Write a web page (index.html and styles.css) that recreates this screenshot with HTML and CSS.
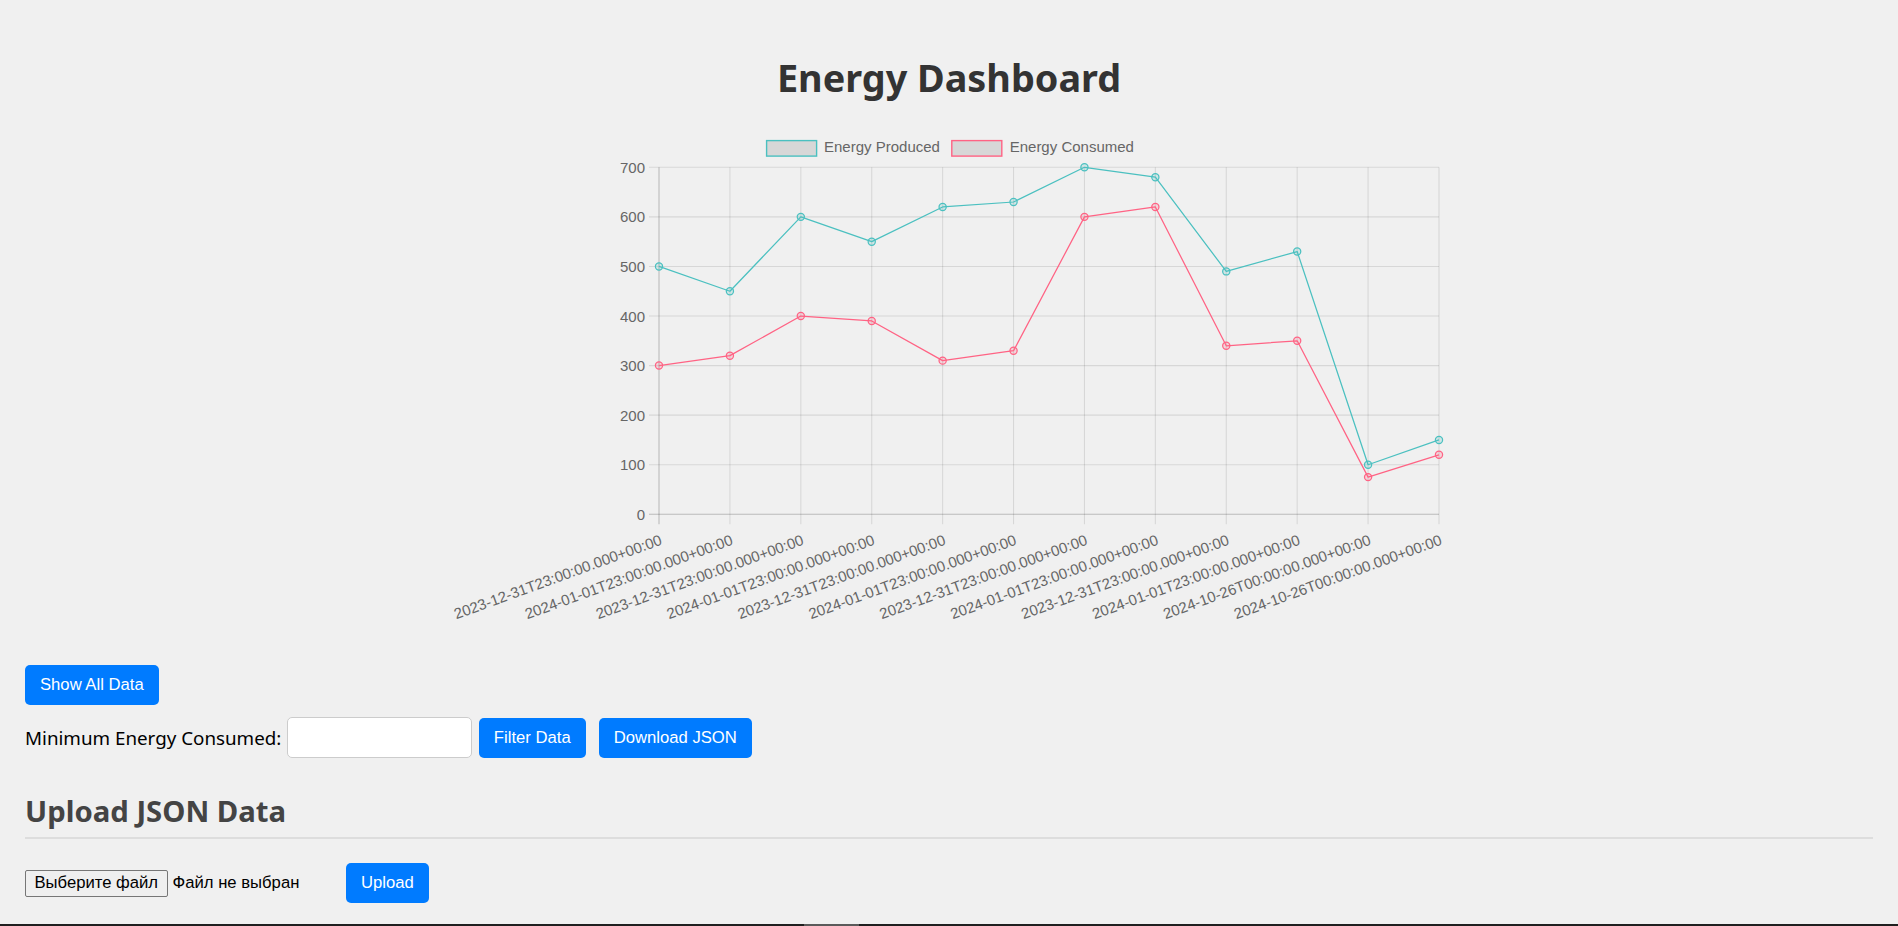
FILE: index.html
```html
<!DOCTYPE html>
<html lang="en">
<head>
<meta charset="utf-8">
<title>Energy Dashboard</title>
<link rel="stylesheet" href="styles.css">
</head>
<body>
<h1 class="title">Energy Dashboard</h1>

<div class="chart-wrap">
<svg class="chart" width="1000" height="500" viewBox="0 0 1000 500" xmlns="http://www.w3.org/2000/svg">
  <!-- legend -->
  <g class="legend">
    <rect class="lg-box lg-prod" x="317.6" y="13.6" width="50" height="15.5"/>
    <text class="lg-text" x="375" y="25.3">Energy Produced</text>
    <rect class="lg-box lg-cons" x="502.8" y="13.6" width="50" height="15.5"/>
    <text class="lg-text" x="560.7" y="25.3">Energy Consumed</text>
  </g>
  <!-- horizontal grid -->
  <g class="grid">
    <line x1="200" y1="40.3" x2="990" y2="40.3"/>
    <line x1="200" y1="89.87" x2="990" y2="89.87"/>
    <line x1="200" y1="139.44" x2="990" y2="139.44"/>
    <line x1="200" y1="189.02" x2="990" y2="189.02"/>
    <line x1="200" y1="238.59" x2="990" y2="238.59"/>
    <line x1="200" y1="288.16" x2="990" y2="288.16"/>
    <line x1="200" y1="337.73" x2="990" y2="337.73"/>
    <line x1="280.91" y1="40.3" x2="280.91" y2="397.3"/>
    <line x1="351.82" y1="40.3" x2="351.82" y2="397.3"/>
    <line x1="422.73" y1="40.3" x2="422.73" y2="397.3"/>
    <line x1="493.64" y1="40.3" x2="493.64" y2="397.3"/>
    <line x1="564.55" y1="40.3" x2="564.55" y2="397.3"/>
    <line x1="635.45" y1="40.3" x2="635.45" y2="397.3"/>
    <line x1="706.36" y1="40.3" x2="706.36" y2="397.3"/>
    <line x1="777.27" y1="40.3" x2="777.27" y2="397.3"/>
    <line x1="848.18" y1="40.3" x2="848.18" y2="397.3"/>
    <line x1="919.09" y1="40.3" x2="919.09" y2="397.3"/>
    <line x1="990" y1="40.3" x2="990" y2="397.3"/>
  </g>
  <g class="axis">
    <line x1="200" y1="387.3" x2="990" y2="387.3"/>
    <line x1="210" y1="40.3" x2="210" y2="397.3"/>
  </g>
  <!-- y labels -->
  <g class="ylab">
    <text x="196" y="40.3">700</text>
    <text x="196" y="89.87">600</text>
    <text x="196" y="139.44">500</text>
    <text x="196" y="189.02">400</text>
    <text x="196" y="238.59">300</text>
    <text x="196" y="288.16">200</text>
    <text x="196" y="337.73">100</text>
    <text x="196" y="387.3">0</text>
  </g>
  <!-- x labels -->
  <g class="xlab">
    <text transform="translate(212 412) rotate(-20)">2023-12-31T23:00:00.000+00:00</text>
    <text transform="translate(282.91 412) rotate(-20)">2024-01-01T23:00:00.000+00:00</text>
    <text transform="translate(353.82 412) rotate(-20)">2023-12-31T23:00:00.000+00:00</text>
    <text transform="translate(424.73 412) rotate(-20)">2024-01-01T23:00:00.000+00:00</text>
    <text transform="translate(495.64 412) rotate(-20)">2023-12-31T23:00:00.000+00:00</text>
    <text transform="translate(566.55 412) rotate(-20)">2024-01-01T23:00:00.000+00:00</text>
    <text transform="translate(637.45 412) rotate(-20)">2023-12-31T23:00:00.000+00:00</text>
    <text transform="translate(708.36 412) rotate(-20)">2024-01-01T23:00:00.000+00:00</text>
    <text transform="translate(779.27 412) rotate(-20)">2023-12-31T23:00:00.000+00:00</text>
    <text transform="translate(850.18 412) rotate(-20)">2024-01-01T23:00:00.000+00:00</text>
    <text transform="translate(921.09 412) rotate(-20)">2024-10-26T00:00:00.000+00:00</text>
    <text transform="translate(992 412) rotate(-20)">2024-10-26T00:00:00.000+00:00</text>
  </g>
  <!-- series -->
  <polyline class="line-prod" points="210,139.44 280.91,164.23 351.82,89.87 422.73,114.66 493.64,79.96 564.55,75 635.45,40.3 706.36,50.22 777.27,144.4 848.18,124.57 919.09,337.73 990,312.94"/>
  <polyline class="line-cons" points="210,238.59 280.91,228.67 351.82,189.02 422.73,193.97 493.64,233.63 564.55,223.71 635.45,89.87 706.36,79.96 777.27,218.76 848.18,213.8 919.09,350.12 990,327.81"/>
  <g class="pt-prod">
    <circle cx="210" cy="139.44" r="3.6"/>
    <circle cx="280.91" cy="164.23" r="3.6"/>
    <circle cx="351.82" cy="89.87" r="3.6"/>
    <circle cx="422.73" cy="114.66" r="3.6"/>
    <circle cx="493.64" cy="79.96" r="3.6"/>
    <circle cx="564.55" cy="75" r="3.6"/>
    <circle cx="635.45" cy="40.3" r="3.6"/>
    <circle cx="706.36" cy="50.22" r="3.6"/>
    <circle cx="777.27" cy="144.4" r="3.6"/>
    <circle cx="848.18" cy="124.57" r="3.6"/>
    <circle cx="919.09" cy="337.73" r="3.6"/>
    <circle cx="990" cy="312.94" r="3.6"/>
  </g>
  <g class="pt-cons">
    <circle cx="210" cy="238.59" r="3.6"/>
    <circle cx="280.91" cy="228.67" r="3.6"/>
    <circle cx="351.82" cy="189.02" r="3.6"/>
    <circle cx="422.73" cy="193.97" r="3.6"/>
    <circle cx="493.64" cy="233.63" r="3.6"/>
    <circle cx="564.55" cy="223.71" r="3.6"/>
    <circle cx="635.45" cy="89.87" r="3.6"/>
    <circle cx="706.36" cy="79.96" r="3.6"/>
    <circle cx="777.27" cy="218.76" r="3.6"/>
    <circle cx="848.18" cy="213.8" r="3.6"/>
    <circle cx="919.09" cy="350.12" r="3.6"/>
    <circle cx="990" cy="327.81" r="3.6"/>
  </g>
</svg>
</div>

<div class="actions">
  <button class="btn">Show All Data</button>
</div>

<div class="filter-row">
  <label class="filter-label" for="minEnergy">Minimum Energy Consumed:</label>
  <input class="filter-input" id="minEnergy" type="number">
  <button class="btn btn-filter">Filter Data</button>
  <button class="btn btn-download">Download JSON</button>
</div>

<h2 class="section-title">Upload JSON Data</h2>

<div class="upload-row">
  <div class="file-picker">
    <span class="file-btn">Выберите файл</span>
    <span class="file-name">Файл не выбран</span>
  </div>
  <button class="btn btn-upload">Upload</button>
</div>

<div class="hscroll"><div class="hscroll-thumb"></div></div>
</body>
</html>
```

FILE: styles.css
```css
html, body {
  margin: 0;
  padding: 0;
}

body {
  background: #f0f0f0;
  padding: 0 25px;
  font-family: "Noto Sans", "Open Sans", sans-serif;
  color: #000;
  overflow: hidden;
  height: 926px;
  box-sizing: border-box;
}

.title {
  margin: 54px 0 0;
  font-size: 37.8px;
  line-height: 48px;
  font-weight: 700;
  color: #333;
  text-align: center;
}

.chart-wrap {
  display: flex;
  justify-content: center;
  margin-top: 25px;
}

.chart {
  display: block;
  width: 1000px;
  height: 500px;
  font-family: "Liberation Sans", Arial, sans-serif;
}

.lg-box {
  fill: rgba(0, 0, 0, 0.1);
  stroke-width: 1.4;
}
.lg-prod { stroke: rgb(75, 192, 192); }
.lg-cons { stroke: rgb(255, 99, 132); }

.lg-text {
  font-size: 15px;
  fill: #666;
}

.grid line {
  stroke: rgba(0, 0, 0, 0.1);
  stroke-width: 1.1;
}

.axis line {
  stroke: rgba(0, 0, 0, 0.22);
  stroke-width: 1.1;
}

.ylab text {
  font-size: 15px;
  fill: #666;
  text-anchor: end;
  dominant-baseline: central;
}

.xlab text {
  font-size: 15px;
  fill: #666;
  text-anchor: end;
  dominant-baseline: central;
}

.line-prod, .line-cons {
  fill: none;
  stroke-width: 1.25;
  stroke-linejoin: round;
}
.line-prod { stroke: rgb(75, 192, 192); }
.line-cons { stroke: rgb(255, 99, 132); }

.pt-prod circle {
  fill: rgba(75, 192, 192, 0.2);
  stroke: rgb(75, 192, 192);
  stroke-width: 1.25;
}
.pt-cons circle {
  fill: rgba(255, 99, 132, 0.2);
  stroke: rgb(255, 99, 132);
  stroke-width: 1.25;
}

.btn {
  height: 40px;
  padding: 0 15px;
  border: none;
  border-radius: 5px;
  background: #007bff;
  color: #fff;
  font-family: "Liberation Sans", Arial, sans-serif;
  font-size: 16.67px;
  cursor: pointer;
}

.actions {
  margin-top: 38px;
  display: flex;
}

.filter-row {
  margin-top: 12px;
  display: flex;
  align-items: center;
  height: 41px;
}

.filter-label {
  font-size: 18.8px;
  color: #000;
}

.filter-input {
  box-sizing: border-box;
  width: 185px;
  height: 41px;
  margin: 0 0 0 5.5px;
  border: 1px solid #ccc;
  border-radius: 5px;
  background: #fff;
  padding: 0 8px;
  font-size: 16px;
}

.btn-filter {
  margin-left: 7px;
}

.btn-download {
  margin-left: 13px;
}

.section-title {
  margin: 34.5px 0 0;
  padding-bottom: 8.5px;
  font-size: 29.3px;
  line-height: 36px;
  font-weight: 700;
  color: #444;
  border-bottom: 2px solid #ddd;
}

.upload-row {
  margin-top: 24px;
  display: flex;
  align-items: center;
  height: 40px;
}

.file-picker {
  width: 316px;
  display: flex;
  align-items: center;
  font-family: "Liberation Sans", Arial, sans-serif;
  font-size: 16.67px;
  color: #000;
}

.file-btn {
  box-sizing: border-box;
  height: 27px;
  display: flex;
  align-items: center;
  padding: 0 8.5px;
  border: 1px solid #767676;
  border-radius: 2px;
  background: #efefef;
}

.file-name {
  margin-left: 5px;
}

.btn-upload {
  margin-left: 5px;
}

.hscroll {
  position: fixed;
  left: 0;
  right: 0;
  bottom: 0;
  height: 2px;
  background: #1f1f1f;
}

.hscroll-thumb {
  position: absolute;
  left: 804px;
  width: 55px;
  top: 0;
  bottom: 0;
  background: #5a5a5a;
}
```
